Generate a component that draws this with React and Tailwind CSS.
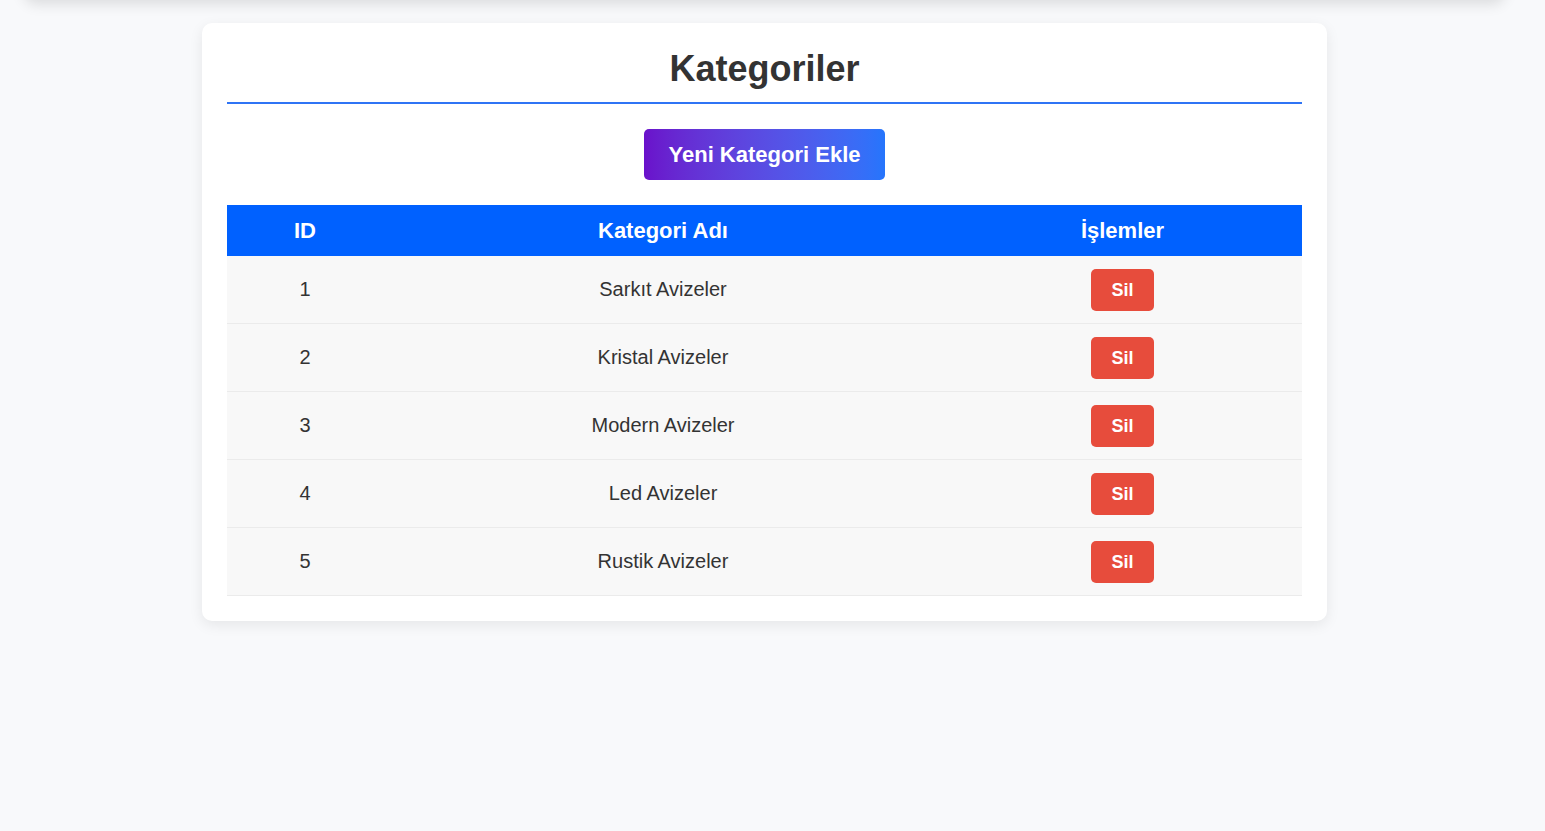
import React from 'react';

const categories = [
  { id: 1, name: "Sarkıt Avizeler" },
  { id: 2, name: "Kristal Avizeler" },
  { id: 3, name: "Modern Avizeler" },
  { id: 4, name: "Led Avizeler" },
  { id: 5, name: "Rustik Avizeler" },
];

const App = () => {
  return (
    <div className="min-h-screen bg-[#f8f9fb] overflow-hidden font-['Liberation_Sans',Arial,sans-serif] text-[#333]">
      <div className="w-[1529px] flex flex-col">
        {/* Navbar scrolled above the viewport, only its shadow shows */}
        <div className="-mt-[70px] h-[70px] mx-6 rounded-b-xl bg-white shadow-[0_4px_14px_rgba(0,0,0,0.12)]" />

        {/* Card */}
        <div className="mt-[23px] mx-auto w-[1125px] bg-white rounded-[10px] p-[25px] shadow-[0_4px_14px_rgba(0,0,0,0.08)]">
          <h1 className="text-[36px] font-bold text-center leading-[41px] pb-[13px] border-b-2 border-[#2f74f5]">
            Kategoriler
          </h1>

          <div className="flex justify-center mt-[25px]">
            <button className="px-[25px] py-[13px] text-[22px] leading-[25px] font-bold text-white rounded-[5px] bg-gradient-to-r from-[#6a11cb] to-[#2575fc]">
              Yeni Kategori Ekle
            </button>
          </div>

          {/* Table */}
          <div className="mt-[25px]">
            <div className="grid grid-cols-[156px_560px_359px] h-[51px] items-center bg-[#0061ff] text-white text-[22px] font-bold text-center">
              <div>ID</div>
              <div>Kategori Adı</div>
              <div>İşlemler</div>
            </div>
            {categories.map((c) => (
              <div
                key={c.id}
                className="grid grid-cols-[156px_560px_359px] h-[68px] items-center bg-[#f8f8f8] border-b border-[#ebebeb] text-[20px] text-center"
              >
                <div className="mb-[2px]">{c.id}</div>
                <div className="mb-[2px]">{c.name}</div>
                <div className="flex justify-center">
                  <button className="pt-[2px] h-[42px] w-[63px] text-[18px] font-bold text-white bg-[#e74c3c] rounded-[5px]">
                    Sil
                  </button>
                </div>
              </div>
            ))}
          </div>
        </div>
      </div>
    </div>
  );
};

export default App;
